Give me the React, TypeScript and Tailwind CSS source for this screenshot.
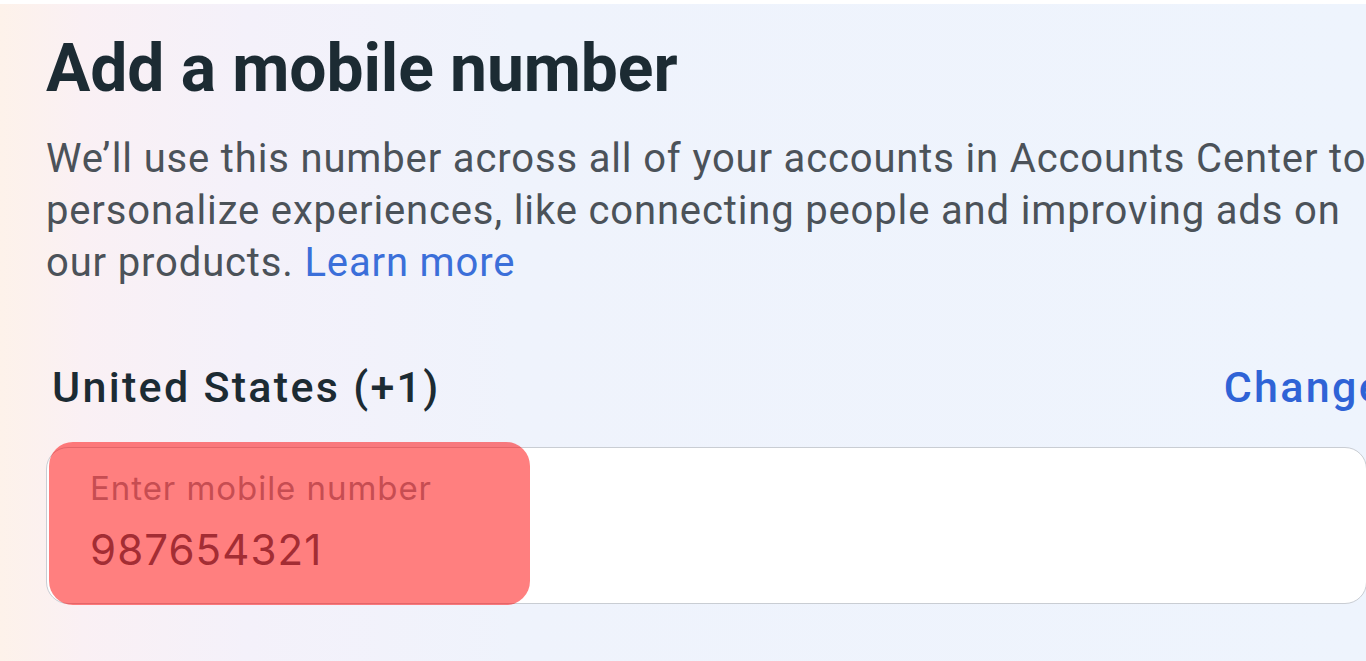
import React from 'react';

export default function App() {
  return (
    <div className="h-[661px] w-[1366px] overflow-hidden bg-white font-['Roboto',sans-serif]">
      <div className="h-1 bg-white" />
      <div className="h-[657px] bg-[linear-gradient(90deg,#fdf2ea_0%,#faf0f4_6%,#f4f1fa_18%,#eff3fc_38%,#eef4fd_100%)] pl-[46px] pt-[32px]">
        <div className="w-[1338px]">
          <h1 className="text-[66px] font-bold leading-[66px] tracking-[-0.1px] text-[#1c2b33]">
            Add a mobile number
          </h1>

          <p className="mt-[31px] whitespace-nowrap text-[40px] leading-[52px] tracking-[0.85px] text-[#4b5259]">
            We’ll use this number across all of your accounts in Accounts Center to
            <br />
            personalize experiences, like connecting people and improving ads on
            <br />
            our products. <span className="text-[#3b6fd9]">Learn more</span>
          </p>

          <div className="mt-[74px] flex items-baseline justify-between pl-[6px] text-[43px] font-medium leading-[48px] tracking-[2.3px]">
            <span className="text-[#1c2b33]">United States (+1)</span>
            <span className="text-[#2f63d6]">Change</span>
          </div>

          <div className="relative mt-[36px] h-[157px] w-[1321px] rounded-[22px] border-[1.5px] border-[#c9cdd3] bg-white pl-[43px] pt-[21px] font-['Inter',sans-serif]">
            <div className="text-[33px] leading-[38px] tracking-[0.95px] text-[#8d9ba5]">Enter mobile number</div>
            <div className="mt-[19px] text-[42px] leading-[48px] tracking-[1.1px] text-[#465a69]">987654321</div>
            <div className="absolute -top-[6px] left-[1.5px] h-[163px] w-[481px] rounded-[24px] bg-[#ff0000]/50" />
          </div>
        </div>
      </div>
    </div>
  );
}
